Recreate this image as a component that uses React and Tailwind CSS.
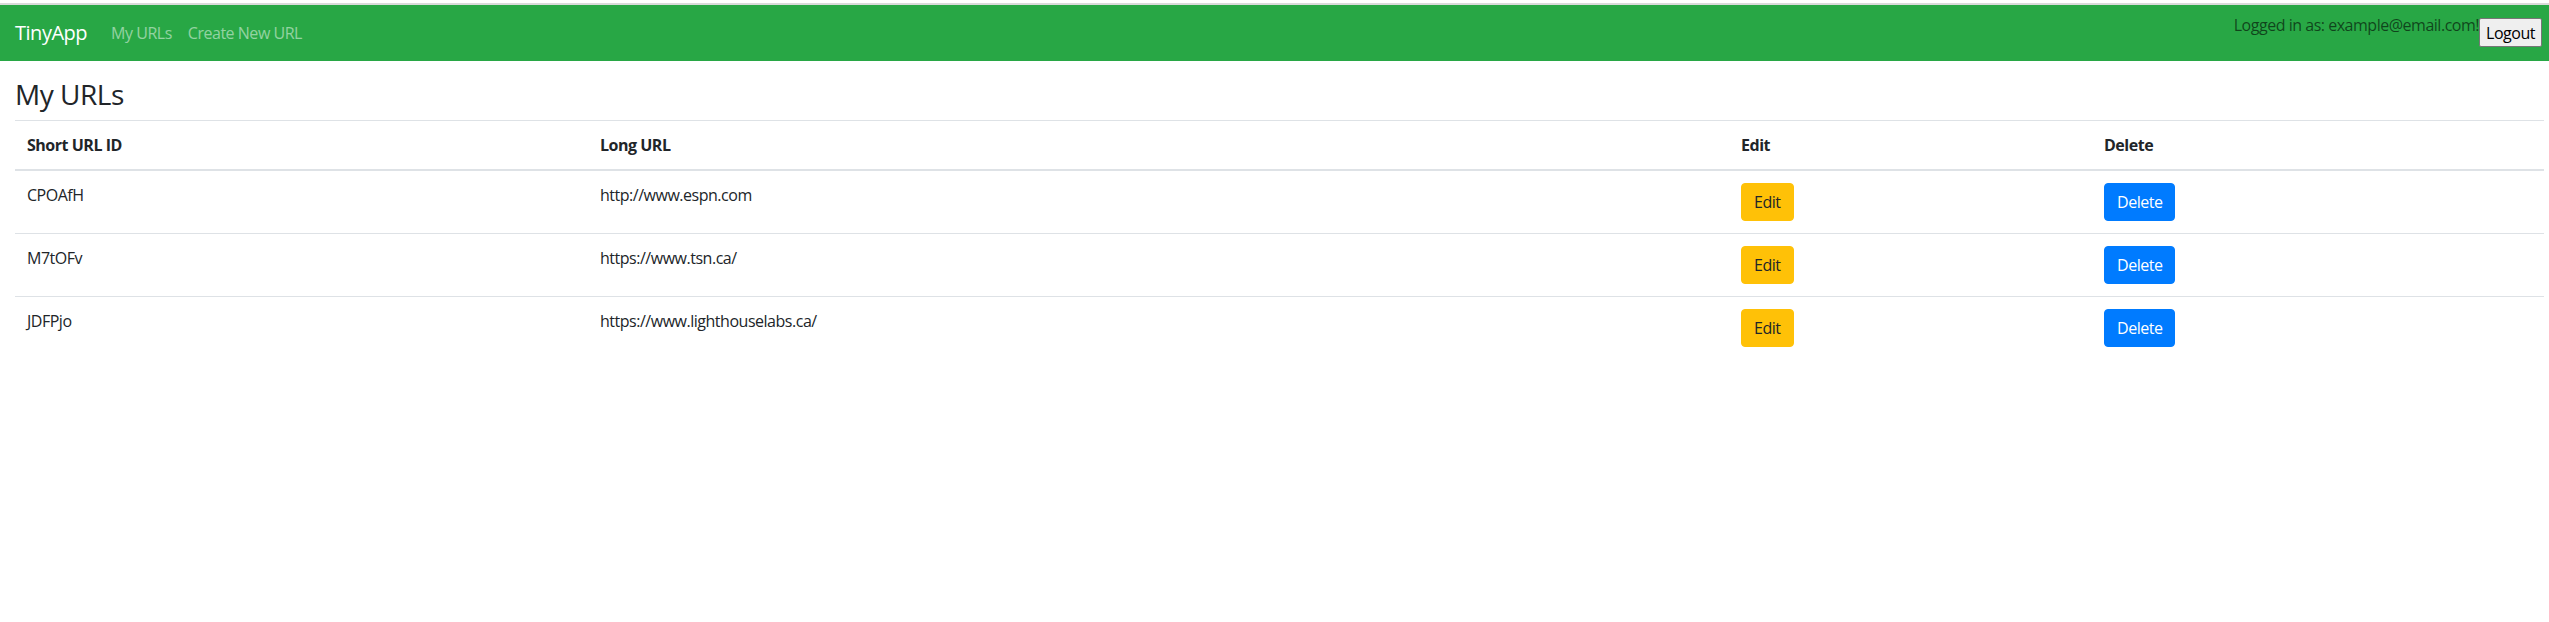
import React from 'react';

const urls = [
  { id: 'CPOAfH', longURL: 'http://www.espn.com' },
  { id: 'M7tOFv', longURL: 'https://www.tsn.ca/' },
  { id: 'JDFPjo', longURL: 'https://www.lighthouselabs.ca/' },
];

const Navbar = () => {
  return (
    <div>
      <div className="h-[3px] bg-white"></div>
      <div className="h-[2px] bg-[#dadada]"></div>
      <nav className="bg-[#28a745] h-[56px] pl-[15px] pr-[7px] py-2 flex items-start justify-between">
        <div className="flex items-center h-10">
          <a href="#" className="text-white text-[20px] leading-[30px] mr-4">TinyApp</a>
          <a href="#" className="text-white/50 text-base leading-6 px-2">My URLs</a>
          <a href="#" className="text-white/50 text-base leading-6 px-2">Create New URL</a>
        </div>
        <div className="flex items-start">
          <span className="text-black/60 text-base leading-6">Logged in as: example@email.com!</span>
          <button className="mt-[5px] h-[29px] px-[6px] bg-[#efefef] border border-[#767676] rounded-[2px] text-black text-base leading-5">
            Logout
          </button>
        </div>
      </nav>
    </div>
  );
};

const App = () => {
  return (
    <div
      className="min-h-screen bg-white text-[#212529] tracking-[-0.03em]"
      style={{ fontFamily: '"Open Sans", "Noto Sans", sans-serif' }}
    >
      <Navbar />
      <div className="pl-[15px] pr-[5px]">
        <h3 className="mt-[17px] mb-2 text-[28px] leading-[1.2] font-medium">My URLs</h3>
        <table className="w-full table-fixed border-collapse text-base">
          <thead>
            <tr>
              <th className="w-[573px] text-left font-bold p-3 leading-6 border-t border-b-2 border-[#dee2e6]">Short URL ID</th>
              <th className="w-[1141px] text-left font-bold p-3 leading-6 border-t border-b-2 border-[#dee2e6]">Long URL</th>
              <th className="w-[363px] text-left font-bold p-3 leading-6 border-t border-b-2 border-[#dee2e6]">Edit</th>
              <th className="text-left font-bold p-3 leading-6 border-t border-b-2 border-[#dee2e6]">Delete</th>
            </tr>
          </thead>
          <tbody>
            {urls.map((url) => (
              <tr key={url.id}>
                <td className="p-3 leading-6 align-top border-t border-[#dee2e6]">{url.id}</td>
                <td className="p-3 leading-6 align-top border-t border-[#dee2e6]">{url.longURL}</td>
                <td className="p-3 leading-6 align-top border-t border-[#dee2e6]">
                  <button className="h-[38px] px-3 bg-[#ffc107] text-[#212529] rounded border border-[#ffc107] leading-6">Edit</button>
                </td>
                <td className="p-3 leading-6 align-top border-t border-[#dee2e6]">
                  <button className="h-[38px] px-3 bg-[#007bff] text-white rounded border border-[#007bff] leading-6">Delete</button>
                </td>
              </tr>
            ))}
          </tbody>
        </table>
      </div>
    </div>
  );
};

export default App;
